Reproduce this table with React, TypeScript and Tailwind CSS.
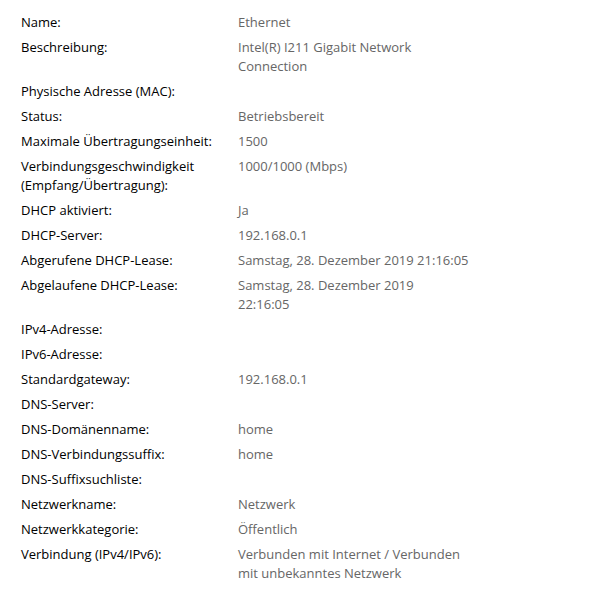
import React from "react";

type Row = { label: React.ReactNode; value?: React.ReactNode };

const rows: Row[] = [
  { label: "Name:", value: "Ethernet" },
  { label: "Beschreibung:", value: <>Intel(R) I211 Gigabit Network<br />Connection</> },
  { label: "Physische Adresse (MAC):", value: "" },
  { label: "Status:", value: "Betriebsbereit" },
  { label: "Maximale Übertragungseinheit:", value: "1500" },
  { label: <>Verbindungsgeschwindigkeit<br />(Empfang/Übertragung):</>, value: "1000/1000 (Mbps)" },
  { label: "DHCP aktiviert:", value: "Ja" },
  { label: "DHCP-Server:", value: "192.168.0.1" },
  { label: "Abgerufene DHCP-Lease:", value: "Samstag, 28. Dezember 2019 21:16:05" },
  { label: "Abgelaufene DHCP-Lease:", value: <>Samstag, 28. Dezember 2019<br />22:16:05</> },
  { label: "IPv4-Adresse:", value: "" },
  { label: "IPv6-Adresse:", value: "" },
  { label: "Standardgateway:", value: "192.168.0.1" },
  { label: "DNS-Server:", value: "" },
  { label: "DNS-Domänenname:", value: "home" },
  { label: "DNS-Verbindungssuffix:", value: "home" },
  { label: "DNS-Suffixsuchliste:", value: "" },
  { label: "Netzwerkname:", value: "Netzwerk" },
  { label: "Netzwerkkategorie:", value: "Öffentlich" },
  { label: "Verbindung (IPv4/IPv6):", value: <>Verbunden mit Internet / Verbunden<br />mit unbekanntes Netzwerk</> },
];

export default function App() {
  return (
    <div
      className="w-[591px] h-[597px] bg-white pl-[21px] pt-[13px]"
      style={{ fontFamily: '"Open Sans", "Noto Sans", sans-serif' }}
    >
      <div className="flex flex-col gap-[6px]">
        {rows.map((r, i) => (
          <div key={i} className="grid grid-cols-[217px_1fr] text-[13px] leading-[19px]">
            <div className="text-black whitespace-nowrap">{r.label}</div>
            <div className="text-[#666666] whitespace-nowrap min-h-[19px]">{r.value}</div>
          </div>
        ))}
      </div>
    </div>
  );
}
